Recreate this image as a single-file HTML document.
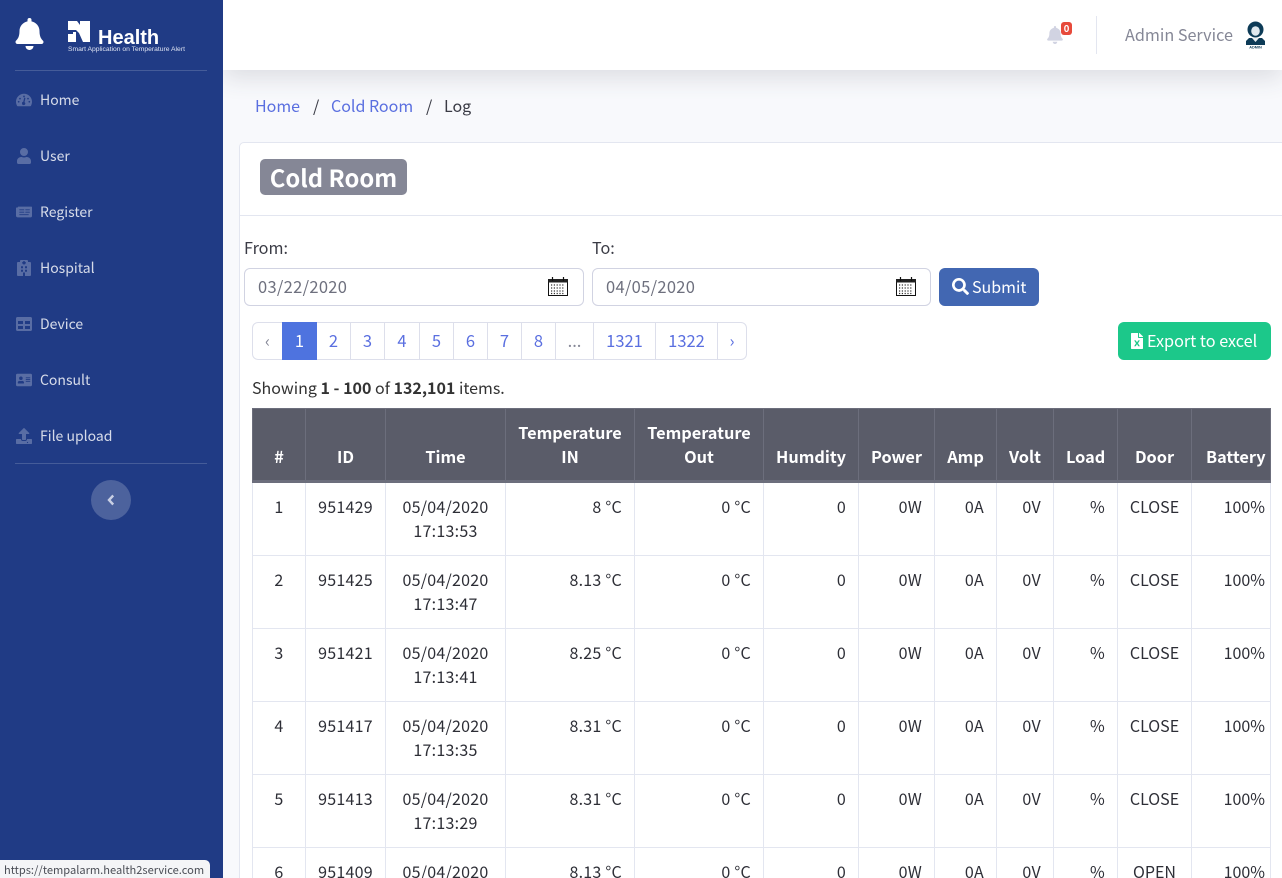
<!DOCTYPE html>
<html style="overflow:hidden;height:878px"><head><meta charset="utf-8"><style>
*{box-sizing:border-box}
html,body{margin:0;padding:0}
body{width:1282px;height:878px;overflow:hidden;position:relative;background:#f8f9fc;font-family:"Noto Sans CJK JP","Liberation Sans",sans-serif;font-size:16px;color:#3a3b45;line-height:24px}
.a{position:absolute;white-space:nowrap}
#side{position:absolute;left:0;top:0;width:223px;height:878px;background:#203b85;z-index:3}
.hr{position:absolute;left:15px;width:192px;height:1px;background:rgba(255,255,255,.17)}
.nav{position:absolute;left:40px;font-size:14px;color:rgba(255,255,255,.82);line-height:20px;white-space:nowrap}
.ic{position:absolute;left:16px;width:16px;height:16px;fill:rgba(255,255,255,.26)}
#top{position:absolute;left:223px;top:0;width:1059px;height:70px;background:#fff;box-shadow:0 8px 24px rgba(58,59,69,.14);z-index:2}
#card{position:absolute;left:239px;top:142px;width:1060px;height:760px;background:#fff;border:1px solid #e3e6f0;border-radius:5px}
.inp{position:absolute;top:268px;height:38px;border:1px solid #d1d3e2;border-radius:6px;background:#fff;color:#6e707e;padding:5px 13px;font-size:16.5px;letter-spacing:.3px;z-index:1}
.pg{position:absolute;top:322px;height:38px;border:1px solid #dddfeb;margin-left:-1px;text-align:center;line-height:34px;color:#5a6fe0;background:#fff;font-size:16.5px;z-index:1}
table{position:absolute;left:252px;top:408px;width:1018px;border-collapse:collapse;table-layout:fixed;z-index:1;font-size:16px;color:#2d2e36}
th{background:#5a5c69;color:#fff;font-weight:700;border:1px solid #6c6e7c;border-bottom:3px solid #6c6e7c;padding:11px 12px 12px;vertical-align:bottom;text-align:center;line-height:24px;font-size:16.3px}
td{border:1px solid #e3e6f0;padding:11px 12px;vertical-align:top;height:73px;line-height:24px;text-align:right;white-space:nowrap;letter-spacing:.25px}
td.c{text-align:center;padding-left:2px;padding-right:2px}
td.d{text-align:center;padding-left:2px;padding-right:2px;letter-spacing:0}
td.r{padding-left:2px;padding-right:5px;letter-spacing:0}
tr.f td{height:74px}
</style></head><body>
<div id="side">
<svg class="a" style="left:15px;top:18px" width="29" height="32" viewBox="0 0 448 512" fill="#fff"><path d="M224 512c35 0 64-29 64-64H160c0 35 29 64 64 64zM439 362c-19-21-55-52-55-154 0-78-54-140-128-155V32a32 32 0 1 0-64 0v21C118 68 64 130 64 208c0 102-36 133-55 154-6 6-9 14-9 22 0 16 13 32 32 32h384c19 0 32-16 32-32 0-8-3-16-9-22z"/></svg>
<svg class="a" style="left:68px;top:21px" width="23" height="22" viewBox="0 0 23 22" fill="#fff"><path d="M0 0h9l3 4V0h10v21h-7L11 12 8 9H0zM0 13h5v-2h3v10H0z"/></svg>
<div class="a" style="left:98px;top:26px;font:700 20px/24px 'Liberation Sans',sans-serif;color:#fff">Health</div>
<div class="a" style="left:68px;top:45px;font:6.75px/10px 'Liberation Sans',sans-serif;color:#dfe4f2">Smart Application on Temperature Alert</div>
<div class="hr" style="top:70px"></div>
<svg class="ic" style="top:92px" viewBox="0 0 576 512"><path d="M288 32C129 32 0 161 0 320c0 53 14 103 39 146 6 9 16 14 27 14h444c11 0 21-5 27-14 25-43 39-93 39-146 0-159-129-288-288-288zm0 64a32 32 0 1 1 0 64 32 32 0 0 1 0-64zM96 352a32 32 0 1 1 0-64 32 32 0 0 1 0 64zm48-112a32 32 0 1 1 0-64 32 32 0 0 1 0 64zm190 128a60 60 0 1 1-72-48l30-130c3-13 16-20 28-17s20 16 17 28l-30 130c10 8 27 22 27 37zm98-128a32 32 0 1 1 0-64 32 32 0 0 1 0 64zm48 112a32 32 0 1 1 0-64 32 32 0 0 1 0 64z"/></svg>
<div class="nav" style="top:90px">Home</div>
<svg class="ic" style="top:148px" viewBox="0 0 448 512"><path d="M224 256a128 128 0 1 0 0-256 128 128 0 0 0 0 256zm90 32h-17a174 174 0 0 1-146 0h-17C60 288 0 348 0 422v42c0 27 21 48 48 48h352c27 0 48-21 48-48v-42c0-74-60-134-134-134z"/></svg>
<div class="nav" style="top:146px">User</div>
<svg class="ic" style="top:204px" viewBox="0 0 576 512"><path d="M552 64H88c-13 0-24 11-24 24v8H24C11 96 0 107 0 120v272c0 31 25 56 56 56h472c27 0 48-21 48-48V88c0-13-11-24-24-24zM120 160h176v32H120zm0 88h176v32H120zm0 88h336v32H120zm216-176h160v32H336zm0 88h160v32H336z"/></svg>
<div class="nav" style="top:202px">Register</div>
<svg class="ic" style="top:260px" viewBox="0 0 448 512"><path d="M416 512H32c-18 0-32-14-32-32V96c0-18 14-32 32-32h64V32c0-18 14-32 32-32h192c18 0 32 14 32 32v32h64c18 0 32 14 32 32v384c0 18-14 32-32 32zM190 40v30h-30v40h30v30h68v-30h30V70h-30V40zM128 200v64h64v-64zm128 0v64h64v-64zM128 312v64h64v-64zm128 0v64h64v-64zm-64 88v112h64V400z"/></svg>
<div class="nav" style="top:258px">Hospital</div>
<svg class="ic" style="top:316px" viewBox="0 0 512 512"><path d="M464 32H48C21 32 0 53 0 80v352c0 27 21 48 48 48h416c27 0 48-21 48-48V80c0-27-21-48-48-48zM224 416H64v-96h160zm0-160H64v-96h160zm224 160H288v-96h160zm0-160H288v-96h160z"/></svg>
<div class="nav" style="top:314px">Device</div>
<svg class="ic" style="top:372px" viewBox="0 0 576 512"><path d="M528 32H48C21 32 0 53 0 80v352c0 27 21 48 48 48h480c27 0 48-21 48-48V80c0-27-21-48-48-48zM176 128a64 64 0 1 1 0 128 64 64 0 0 1 0-128zm112 238c0 11-11 18-24 18H88c-13 0-24-7-24-18v-14c0-40 30-64 67-64h6c12 6 25 8 39 8s27-2 39-8h6c37 0 67 24 67 64zm224-46H352v-32h160zm0-64H352v-32h160zm0-64H352v-32h160z"/></svg>
<div class="nav" style="top:370px">Consult</div>
<svg class="ic" style="top:428px" viewBox="0 0 512 512"><path d="M296 384h-80c-13 0-24-11-24-24V192h-88c-18 0-27-22-14-34L242 7c8-8 20-8 28 0l152 151c13 12 4 34-14 34h-88v168c0 13-11 24-24 24zm216-8v112c0 13-11 24-24 24H24c-13 0-24-11-24-24V376c0-13 11-24 24-24h136v8c0 31 25 56 56 56h80c31 0 56-25 56-56v-8h136c13 0 24 11 24 24zm-124 88a20 20 0 1 0-40 0 20 20 0 0 0 40 0z"/></svg>
<div class="nav" style="top:426px">File upload</div>
<div class="hr" style="top:463px"></div>
<div class="a" style="left:91px;top:480px;width:40px;height:40px;border-radius:50%;background:rgba(255,255,255,.2)"></div>
<svg class="a" style="left:107px;top:494px" width="8" height="12" viewBox="0 0 8 12"><path d="M6.200 1.500 2 6l4.200 4.500" fill="none" stroke="#c9d0e4" stroke-width="2.400"/></svg>
</div>
<div class="a" style="left:0;top:860px;width:210px;height:18px;background:#f4f5f7;border-top-right-radius:5px;z-index:5;font-size:11.1px;line-height:21px;color:#4a4d55;padding-left:4px;overflow:hidden">https://tempalarm.health2service.com</div>

<div id="top"></div>
<svg class="a" style="left:1047px;top:26px;z-index:3" width="16" height="18" viewBox="0 0 448 512" fill="#d1d3e2"><path d="M224 512c35 0 64-29 64-64H160c0 35 29 64 64 64zM439 362c-19-21-55-52-55-154 0-78-54-140-128-155V32a32 32 0 1 0-64 0v21C118 68 64 130 64 208c0 102-36 133-55 154-6 6-9 14-9 22 0 16 13 32 32 32h384c19 0 32-16 32-32 0-8-3-16-9-22z"/></svg>
<div class="a" style="left:1061px;top:22px;width:11px;height:13px;background:#e74a3b;border-radius:3px;z-index:3;color:#fff;font-size:9.5px;font-weight:700;line-height:13px;text-align:center">0</div>
<div class="a" style="left:1096px;top:16px;width:1px;height:38px;background:#e3e6f0;z-index:3"></div>
<div class="a" style="left:1125px;top:22px;z-index:3;color:#858796;font-size:16.200px">Admin Service</div>
<svg class="a" style="left:1246px;top:21px;z-index:3" width="20" height="28" viewBox="0 0 20 28"><ellipse cx="9.500" cy="8.500" rx="8" ry="8" fill="#0d3b57"/><path d="M3 17h13l3 3v4H0v-4z" fill="#0d3b57"/><ellipse cx="9.500" cy="10" rx="4.300" ry="4.800" fill="#dfe8ee"/><path d="M6 17h7l-3.500 4z" fill="#e8eef2"/><text x="9.500" y="27.500" font-size="3.800" font-family="Liberation Sans" font-weight="700" text-anchor="middle" fill="#0d3b57">ADMIN</text></svg>

<div class="a" style="left:255px;top:93px;color:#5a6fe0">Home</div>
<div class="a" style="left:313px;top:93px;color:#3a3b45">/</div>
<div class="a" style="left:331px;top:93px;color:#5a6fe0">Cold Room</div>
<div class="a" style="left:426px;top:93px;color:#3a3b45">/</div>
<div class="a" style="left:444px;top:93px;color:#3a3b45">Log</div>

<div id="card"></div>
<div class="a" style="left:239px;top:215px;width:1043px;height:1px;background:#e3e6f0;z-index:1"></div>
<div class="a" style="left:260px;top:159px;width:147px;height:36px;background:#858796;border-radius:5px;color:#fff;font-weight:700;font-size:23.800px;line-height:35px;text-align:center;z-index:1">Cold Room</div>

<div class="a" style="left:244px;top:235px;font-size:16.200px;z-index:1">From:</div>
<div class="a" style="left:592px;top:235px;font-size:16.200px;z-index:1">To:</div>
<div class="inp" style="left:244px;width:340px">03/22/2020</div>
<div class="inp" style="left:592px;width:339px">04/05/2020</div>
<svg class="a" style="left:548px;top:277px;z-index:2" width="20" height="19" viewBox="0 0 20 19"><rect x=".5" y="2.500" width="19" height="16" fill="#fff" stroke="#111"/><rect x="0" y="2" width="20" height="3.500" fill="#222"/><path d="M4.500 0v4M15.500 0v4" stroke="#111" stroke-width="1.200"/><path d="M3 8h14M3 11h14M3 14h14M3 16.500h14" stroke="#333" stroke-width="1.200" stroke-dasharray="1.200 1.600"/></svg>
<svg class="a" style="left:896px;top:277px;z-index:2" width="20" height="19" viewBox="0 0 20 19"><rect x=".5" y="2.500" width="19" height="16" fill="#fff" stroke="#111"/><rect x="0" y="2" width="20" height="3.500" fill="#222"/><path d="M4.500 0v4M15.500 0v4" stroke="#111" stroke-width="1.200"/><path d="M3 8h14M3 11h14M3 14h14M3 16.500h14" stroke="#333" stroke-width="1.200" stroke-dasharray="1.200 1.600"/></svg>
<div class="a" style="left:939px;top:268px;width:100px;height:38px;background:#4267b2;border-radius:6px;z-index:1;color:#fff;font-size:16px;line-height:36px;padding-left:33px">Submit</div>
<svg class="a" style="left:952px;top:278px;z-index:2" width="17" height="17" viewBox="0 0 512 512" fill="#fff"><path d="M505 443 405 343c-4-4-10-7-17-7h-16a208 208 0 1 0-36 36v16c0 7 3 13 7 17l100 100c9 9 24 9 34 0l28-28c9-10 9-25 0-34zM208 336a128 128 0 1 1 0-256 128 128 0 0 1 0 256z"/></svg>

<div class="pg" style="left:253px;width:31px;border-radius:6px 0 0 6px;color:#858796">‹</div>
<div class="pg" style="left:283px;width:35px;background:#4e73df;border-color:#4e73df;color:#fff;z-index:2">1</div>
<div class="pg" style="left:317px;width:35px">2</div>
<div class="pg" style="left:351px;width:35px">3</div>
<div class="pg" style="left:385px;width:36px">4</div>
<div class="pg" style="left:420px;width:35px">5</div>
<div class="pg" style="left:454px;width:35px">6</div>
<div class="pg" style="left:488px;width:35px">7</div>
<div class="pg" style="left:522px;width:35px">8</div>
<div class="pg" style="left:556px;width:39px;color:#858796">...</div>
<div class="pg" style="left:594px;width:63px">1321</div>
<div class="pg" style="left:656px;width:63px">1322</div>
<div class="pg" style="left:718px;width:30px;border-radius:0 6px 6px 0">›</div>

<div class="a" style="left:1118px;top:322px;width:153px;height:38px;background:#1cc88a;border-radius:6px;z-index:1;color:#fff;font-size:16.200px;line-height:36px;padding-left:29px">Export to excel</div>
<svg class="a" style="left:1131px;top:333px;z-index:2" width="12" height="16" viewBox="0 0 384 512" fill="#fff"><path d="M224 136V0H24C11 0 0 11 0 24v464c0 13 11 24 24 24h336c13 0 24-11 24-24V160H248c-13 0-24-11-24-24zm60 98-60 94 60 94h-52l-40-66-40 66h-52l60-94-60-94h52l40 66 40-66zM377 105 279 7c-5-5-11-7-17-7h-6v128h128v-6c0-6-2-12-7-17z"/></svg>

<div class="a" style="left:252px;top:375px;z-index:1;font-size:16px;color:#333">Showing <b>1 - 100</b> of <b>132,101</b> items.</div>

<table>
<colgroup><col style="width:53px"><col style="width:80px"><col style="width:120px"><col style="width:129px"><col style="width:129px"><col style="width:95px"><col style="width:76px"><col style="width:62px"><col style="width:57px"><col style="width:64px"><col style="width:74px"><col style="width:79px"></colgroup>
<tr><th>#</th><th>ID</th><th>Time</th><th>Temperature IN</th><th>Temperature Out</th><th>Humdity</th><th>Power</th><th>Amp</th><th>Volt</th><th>Load</th><th>Door</th><th style="padding-left:14px;padding-right:5px">Battery</th></tr>
<tr class="f"><td class="c">1</td><td class="c">951429</td><td class="c">05/04/2020<br>17:13:53</td><td>8 °C</td><td>0 °C</td><td>0</td><td>0W</td><td>0A</td><td>0V</td><td>%</td><td class="d">CLOSE</td><td class="r">100%</td></tr>
<tr><td class="c">2</td><td class="c">951425</td><td class="c">05/04/2020<br>17:13:47</td><td>8.13 °C</td><td>0 °C</td><td>0</td><td>0W</td><td>0A</td><td>0V</td><td>%</td><td class="d">CLOSE</td><td class="r">100%</td></tr>
<tr><td class="c">3</td><td class="c">951421</td><td class="c">05/04/2020<br>17:13:41</td><td>8.25 °C</td><td>0 °C</td><td>0</td><td>0W</td><td>0A</td><td>0V</td><td>%</td><td class="d">CLOSE</td><td class="r">100%</td></tr>
<tr><td class="c">4</td><td class="c">951417</td><td class="c">05/04/2020<br>17:13:35</td><td>8.31 °C</td><td>0 °C</td><td>0</td><td>0W</td><td>0A</td><td>0V</td><td>%</td><td class="d">CLOSE</td><td class="r">100%</td></tr>
<tr><td class="c">5</td><td class="c">951413</td><td class="c">05/04/2020<br>17:13:29</td><td>8.31 °C</td><td>0 °C</td><td>0</td><td>0W</td><td>0A</td><td>0V</td><td>%</td><td class="d">CLOSE</td><td class="r">100%</td></tr>
<tr><td class="c">6</td><td class="c">951409</td><td class="c">05/04/2020<br>17:13:23</td><td>8.13 °C</td><td>0 °C</td><td>0</td><td>0W</td><td>0A</td><td>0V</td><td>%</td><td class="d">OPEN</td><td class="r">100%</td></tr>
</table>
</body></html>
